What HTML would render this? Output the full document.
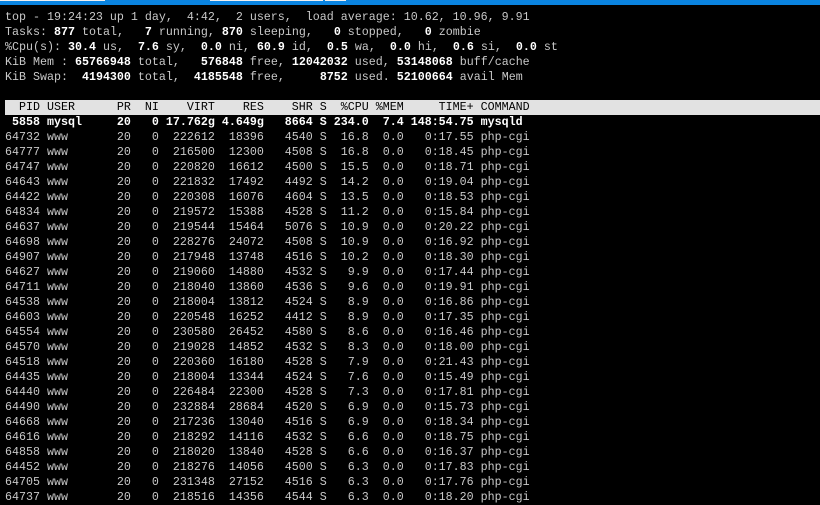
<!DOCTYPE html>
<html><head><meta charset="utf-8"><style>
html,body{margin:0;padding:0;background:#000;width:820px;height:503px;overflow:hidden}
.top{position:absolute;left:0;top:0;width:820px;height:5px;background:#0a84e0}
.top i{position:absolute;top:0;height:1px;background:#f0f0f0}
pre{position:absolute;left:5px;top:10px;margin:0;font-family:"Liberation Mono",monospace;font-size:11.667px;line-height:15px;color:#c8c8c8;white-space:pre}
b{color:#fff;font-weight:bold}
.hd{display:block;background:#e2e2e2;color:#000;width:815px}
.my{color:#fff;font-weight:bold}
</style></head><body>
<div class="top"><i style="left:0;width:105px"></i><i style="left:210px;width:113px"></i><i style="left:325px;width:21px"></i></div>
<pre>top - 19:24:23 up 1 day,  4:42,  2 users,  load average: 10.62, 10.96, 9.91
Tasks: <b>877</b> total,   <b>7</b> running, <b>870</b> sleeping,   <b>0</b> stopped,   <b>0</b> zombie
%Cpu(s): <b>30.4</b> us,  <b>7.6</b> sy,  <b>0.0</b> ni, <b>60.9</b> id,  <b>0.5</b> wa,  <b>0.0</b> hi,  <b>0.6</b> si,  <b>0.0</b> st
KiB Mem : <b>65766948</b> total,   <b>576848</b> free, <b>12042032</b> used, <b>53148068</b> buff/cache
KiB Swap:  <b>4194300</b> total,  <b>4185548</b> free,     <b>8752</b> used. <b>52100664</b> avail Mem

<span class="hd">  PID USER      PR  NI    VIRT    RES    SHR S  %CPU %MEM     TIME+ COMMAND</span><span class="my"> 5858 mysql     20   0 17.762g 4.649g   8664 S 234.0  7.4 148:54.75 mysqld</span>
64732 www       20   0  222612  18396   4540 S  16.8  0.0   0:17.55 php-cgi
64777 www       20   0  216500  12300   4508 S  16.8  0.0   0:18.45 php-cgi
64747 www       20   0  220820  16612   4500 S  15.5  0.0   0:18.71 php-cgi
64643 www       20   0  221832  17492   4492 S  14.2  0.0   0:19.04 php-cgi
64422 www       20   0  220308  16076   4604 S  13.5  0.0   0:18.53 php-cgi
64834 www       20   0  219572  15388   4528 S  11.2  0.0   0:15.84 php-cgi
64637 www       20   0  219544  15464   5076 S  10.9  0.0   0:20.22 php-cgi
64698 www       20   0  228276  24072   4508 S  10.9  0.0   0:16.92 php-cgi
64907 www       20   0  217948  13748   4516 S  10.2  0.0   0:18.30 php-cgi
64627 www       20   0  219060  14880   4532 S   9.9  0.0   0:17.44 php-cgi
64711 www       20   0  218040  13860   4536 S   9.6  0.0   0:19.91 php-cgi
64538 www       20   0  218004  13812   4524 S   8.9  0.0   0:16.86 php-cgi
64603 www       20   0  220548  16252   4412 S   8.9  0.0   0:17.35 php-cgi
64554 www       20   0  230580  26452   4580 S   8.6  0.0   0:16.46 php-cgi
64570 www       20   0  219028  14852   4532 S   8.3  0.0   0:18.00 php-cgi
64518 www       20   0  220360  16180   4528 S   7.9  0.0   0:21.43 php-cgi
64435 www       20   0  218004  13344   4524 S   7.6  0.0   0:15.49 php-cgi
64440 www       20   0  226484  22300   4528 S   7.3  0.0   0:17.81 php-cgi
64490 www       20   0  232884  28684   4520 S   6.9  0.0   0:15.73 php-cgi
64668 www       20   0  217236  13040   4516 S   6.9  0.0   0:18.34 php-cgi
64616 www       20   0  218292  14116   4532 S   6.6  0.0   0:18.75 php-cgi
64858 www       20   0  218020  13840   4528 S   6.6  0.0   0:16.37 php-cgi
64452 www       20   0  218276  14056   4500 S   6.3  0.0   0:17.83 php-cgi
64705 www       20   0  231348  27152   4516 S   6.3  0.0   0:17.76 php-cgi
64737 www       20   0  218516  14356   4544 S   6.3  0.0   0:18.20 php-cgi</pre>
</body></html>
